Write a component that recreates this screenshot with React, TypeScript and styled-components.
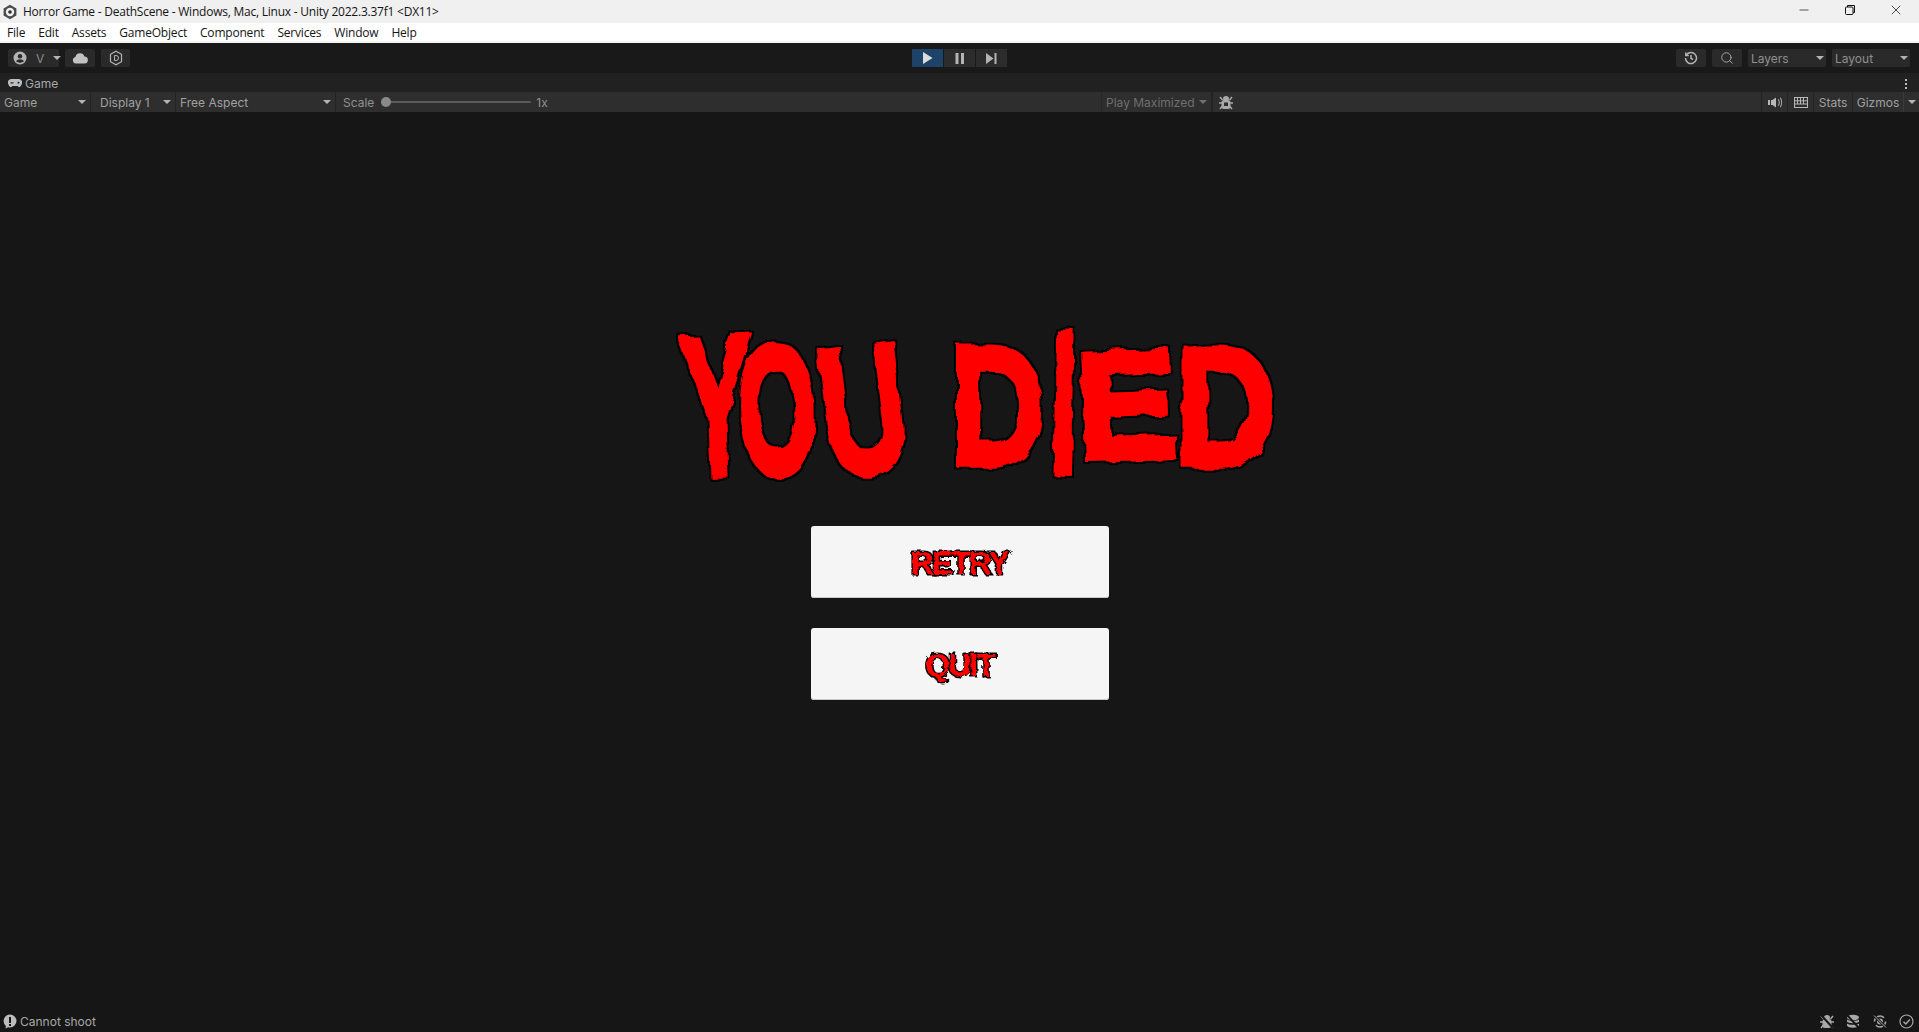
import styled, { createGlobalStyle } from "styled-components";
import { Search, Minus, X } from "lucide-react";

const GlobalStyle = createGlobalStyle`
  html, body {
    margin: 0;
    padding: 0;
    height: 100%;
    overflow: hidden;
    background: #161616;
  }
  #root { height: 100%; }
`;

const MENU_ITEMS = ["File", "Edit", "Assets", "GameObject", "Component", "Services", "Window", "Help"];

const TITLE_LETTERS = [
  { ch: "Y", w: 60, r: -2, sx: 0.68, sy: 1.33, y: 1 },
  { ch: "O", w: 60, r: -2, sx: 0.68, sy: 1.23, y: 5 },
  { ch: "U", w: 112, r: -7, sx: 0.83, sy: 1.23, y: 4 },
  { ch: " ", w: 33, r: 0, sx: 1, sy: 1, y: 0 },
  { ch: "D", w: 90, r: 0, sx: 0.89, sy: 1.14, y: 2 },
  { ch: "I", w: 44, r: 1, sx: 0.7, sy: 1.35, y: -2 },
  { ch: "E", w: 80, r: -2, sx: 1.04, sy: 1.02, y: 1 },
  { ch: "D", w: 118, r: 0, sx: 0.94, sy: 1.14, y: 2 },
];

const App = () => {
  return (
    <>
      <GlobalStyle />
      <Filters width="0" height="0" aria-hidden="true">
        <filter id="brush" x="-10%" y="-10%" width="120%" height="120%">
          <feTurbulence type="fractalNoise" baseFrequency="0.045" numOctaves="2" seed="4" result="noise" />
          <feDisplacementMap in="SourceGraphic" in2="noise" scale="10" result="rough" />
          <feMorphology in="rough" operator="dilate" radius="1.5" result="fat" />
          <feFlood floodColor="#000000" />
          <feComposite in2="fat" operator="in" result="edge" />
          <feMerge>
            <feMergeNode in="edge" />
            <feMergeNode in="rough" />
          </feMerge>
        </filter>
        <filter id="jagged" x="-10%" y="-20%" width="120%" height="140%">
          <feTurbulence type="fractalNoise" baseFrequency="0.18" numOctaves="2" seed="7" result="noise" />
          <feDisplacementMap in="SourceGraphic" in2="noise" scale="5" />
        </filter>
      </Filters>
      <Window>
        <TitleBar>
          <AppLogo viewBox="0 0 16 16">
            <path d="M8 .8 14.400 4.400v7.200L8 15.200 1.600 11.600V4.400z" fill="#4a4a4a" />
            <circle cx="8" cy="8" r="4.200" fill="#eeeeee" />
            <circle cx="8" cy="8" r="1.800" fill="#2e2e2e" />
          </AppLogo>
          <TitleText>Horror Game - DeathScene - Windows, Mac, Linux - Unity 2022.3.37f1 &lt;DX11&gt;</TitleText>
          <WindowControls>
            <WindowButton>
              <Minus size={14} strokeWidth={1.2} />
            </WindowButton>
            <WindowButton>
              <svg width="12" height="12" viewBox="0 0 12 12" fill="none" stroke="#111" strokeWidth="1">
                <rect x="1.500" y="3" width="7.500" height="7.500" rx="1" />
                <path d="M3.500 3V1.500h7V8.500H9" />
              </svg>
            </WindowButton>
            <WindowButton>
              <X size={16} strokeWidth={1.1} />
            </WindowButton>
          </WindowControls>
        </TitleBar>

        <MenuBar>
          {MENU_ITEMS.map((item) => (
            <MenuItem key={item}>{item}</MenuItem>
          ))}
        </MenuBar>

        <MainToolbar>
          <ToolGroup>
            <AccountButton>
              <svg width="14" height="14" viewBox="0 0 14 14">
                <circle cx="7" cy="7" r="6.500" fill="#b4b4b4" />
                <circle cx="7" cy="5.300" r="2.200" fill="#2b2b2b" />
                <path d="M3 10.600c.8-1.700 2.300-2.400 4-2.400s3.200.7 4 2.400L7 12z" fill="#2b2b2b" />
              </svg>
              <AccountName>V</AccountName>
              <Caret />
            </AccountButton>
            <ToolButton $w={30}>
              <svg width="16" height="12" viewBox="0 0 16 12">
                <path d="M4 11.500a3.300 3.300 0 0 1-.6-6.500 4.700 4.700 0 0 1 9-.6A3.500 3.500 0 0 1 12.300 11.500z" fill="#c2c2c2" />
              </svg>
            </ToolButton>
            <ToolButton $w={29}>
              <svg width="14" height="16" viewBox="0 0 14 16" fill="none" stroke="#b4b4b4">
                <path d="M7 1.200 12.500 4.300v7.400L7 14.800 1.500 11.700V4.300z" strokeWidth="1.200" />
                <path d="M5.500 5.500h1.500a2.500 2.500 0 0 1 0 5H5.500z" strokeWidth="1" />
              </svg>
            </ToolButton>
          </ToolGroup>

          <PlayGroup>
            <PlayButton $active>
              <svg width="11" height="12" viewBox="0 0 11 12">
                <path d="M1 0 10.500 6 1 12z" fill="#dcdcdc" />
              </svg>
            </PlayButton>
            <PlayButton>
              <svg width="10" height="11" viewBox="0 0 10 11" fill="#b4b4b4">
                <rect x="0.500" width="3" height="11" />
                <rect x="6" width="3" height="11" />
              </svg>
            </PlayButton>
            <PlayButton>
              <svg width="11" height="11" viewBox="0 0 11 11" fill="#b4b4b4">
                <path d="M0 0 7.500 5.500 0 11z" />
                <rect x="8.500" width="2" height="11" />
              </svg>
            </PlayButton>
          </PlayGroup>

          <ToolGroup $end>
            <ToolButton $w={30}>
              <svg width="14" height="14" viewBox="0 0 14 14" fill="none" stroke="#b4b4b4" strokeWidth="1.500">
                <path d="M2.300 4.200A5.500 5.500 0 1 1 1.500 7" />
                <path d="M1.800 1.500v3h3" />
                <path d="M7 4v3.300l2 1.200" />
              </svg>
            </ToolButton>
            <ToolButton $w={30}>
              <Search size={14} color="#a8a8a8" strokeWidth={1.6} />
            </ToolButton>
            <SelectButton>
              Layers
              <Caret />
            </SelectButton>
            <SelectButton>
              Layout
              <Caret />
            </SelectButton>
          </ToolGroup>
        </MainToolbar>

        <TabStrip>
          <GameTab>
            <svg width="14" height="9" viewBox="0 0 14 9">
              <path d="M3.500 0h7a3.500 3.500 0 0 1 3 5.500C12.800 8 11 9 9.500 7H4.500C3 9 1.200 8 .5 5.500A3.500 3.500 0 0 1 3.500 0z" fill="#bdbdbd" />
              <rect x="2.500" y="3.300" width="3" height="1.200" fill="#222" />
              <circle cx="10.500" cy="3.800" r="1" fill="#222" />
            </svg>
            Game
          </GameTab>
          <KebabMenu>
            <i />
            <i />
            <i />
          </KebabMenu>
        </TabStrip>

        <GameToolbar>
          <GameDropdown $w={91}>
            Game
            <Caret />
          </GameDropdown>
          <GameDropdown $w={85} $indent>
            Display 1
            <Caret />
          </GameDropdown>
          <GameDropdown $w={160}>
            Free Aspect
            <Caret />
          </GameDropdown>
          <ScaleControl>
            Scale
            <ScaleTrack>
              <ScaleThumb />
            </ScaleTrack>
            <span>1x</span>
          </ScaleControl>
          <PlayMaximized>
            Play Maximized
            <Caret />
          </PlayMaximized>
          <GameToggle $w={26}>
            <BugIcon />
          </GameToggle>
          <ToolbarSpacer />
          <GameToggle $w={26}>
            <svg width="14" height="11" viewBox="0 0 14 11" fill="#b8b8b8">
              <rect y="3" width="2" height="5" />
              <path d="M3 3h1.500L8 .5v10L4.500 8H3z" />
              <path d="M10 2.500c1 1.800 1 4.200 0 6l.8.4c1.200-2 1.200-4.800 0-6.800z" />
              <path d="M12 1c1.500 2.700 1.500 6.300 0 9l.8.4c1.600-2.900 1.600-6.900 0-9.800z" />
            </svg>
          </GameToggle>
          <GameToggle $w={26}>
            <svg width="14" height="11" viewBox="0 0 14 11" fill="none" stroke="#b8b8b8" strokeWidth="1">
              <rect x=".5" y=".5" width="13" height="10" />
              <path d="M.5 3.800h13M.5 7h13M3.500 .5v6.500M6.500 .5v6.500M9.500 .5v6.500" />
            </svg>
          </GameToggle>
          <GameTextButton $w={39}>Stats</GameTextButton>
          <GameTextButton $w={51}>Gizmos</GameTextButton>
          <GizmoCaret>
            <Caret />
          </GizmoCaret>
        </GameToolbar>

        <GameView>
          <DeathTitle aria-label="YOU DIED">
            {TITLE_LETTERS.map((l, i) => (
              <TitleLetter
                key={i}
                style={{
                  width: l.w,
                  transform: `translateY(${l.y}px) rotate(${l.r}deg) scale(${l.sx}, ${l.sy})`,
                }}
              >
                {l.ch}
              </TitleLetter>
            ))}
          </DeathTitle>
          <GameButton>
            <ButtonLabel>RETRY</ButtonLabel>
          </GameButton>
          <GameButton>
            <ButtonLabel>QUIT</ButtonLabel>
          </GameButton>
        </GameView>

        <StatusBar>
          <StatusMessage>
            <svg width="14" height="15" viewBox="0 0 14 15">
              <path d="M7 .5a6.500 6.500 0 0 1 0 13c-.6 0-1.200-.1-1.800-.3L2.500 14.500l.4-2.600A6.500 6.500 0 0 1 7 .5z" fill="#bcbcbc" />
              <rect x="6" y="3" width="2" height="6" fill="#161616" />
              <rect x="6" y="10" width="2" height="2" fill="#161616" />
            </svg>
            Cannot shoot
          </StatusMessage>
          <StatusIcons>
            <BugIcon struck />
            <svg width="16" height="15" viewBox="0 0 16 15" fill="#a8a8a8">
              <ellipse cx="8" cy="3.500" rx="6" ry="2.700" />
              <path d="M2 5.500c1 1.800 11 1.800 12 0v2.300c-1 1.900-11 1.900-12 0z" />
              <path d="M2 9.500c1 1.800 11 1.800 12 0v2c-1 3-11 3-12 0z" />
              <path d="M2 1 14 14" stroke="#161616" strokeWidth="2" />
            </svg>
            <svg width="16" height="15" viewBox="0 0 16 15" fill="none" stroke="#a8a8a8" strokeWidth="1.600">
              <path d="M2.500 7.500a5.500 5.500 0 0 1 9.500-3.700M13.500 7.500A5.500 5.500 0 0 1 4 11.200" />
              <circle cx="8" cy="7.500" r="2.200" fill="#a8a8a8" />
              <path d="M2 1.500 14 13.500" stroke="#161616" strokeWidth="2.500" />
              <path d="M2 1.500 14 13.500" strokeWidth="1" />
            </svg>
            <svg width="15" height="15" viewBox="0 0 15 15" fill="none" stroke="#a8a8a8" strokeWidth="1.200">
              <circle cx="7.500" cy="7.500" r="6.500" />
              <path d="M4.500 7.800 6.800 10 10.800 5.500" strokeWidth="1.500" />
            </svg>
          </StatusIcons>
        </StatusBar>
      </Window>
    </>
  );
};

const BugIcon = ({ struck }: { struck?: boolean }) => (
  <svg width="14" height="15" viewBox="0 0 14 15" fill="none">
    <path d="M1 2 3.500 5M13 2 10.500 5M0 8h3M11 8h3M1 14 3.500 11M13 14 10.500 11" stroke="#a8a8a8" strokeWidth="1.500" />
    <ellipse cx="7" cy="3.500" rx="3" ry="2.500" fill="#a8a8a8" />
    <rect x="2.500" y="5" width="9" height="9" rx="2.500" fill="#a8a8a8" />
    {!struck && <rect x="5" y="7.500" width="4" height="3.500" fill="#2e2e2e" />}
    {struck && <path d="M1 1 13 14" stroke="#161616" strokeWidth="2" />}
  </svg>
);

const Filters = styled.svg`
  position: absolute;
`;

const Window = styled.div`
  height: 100vh;
  display: flex;
  flex-direction: column;
  overflow: hidden;
  font-family: Inter, "Liberation Sans", sans-serif;
  font-size: 12px;
  color: #b0b0b0;
`;

const TitleBar = styled.div`
  height: 23px;
  flex: none;
  display: flex;
  align-items: center;
  padding-left: 2px;
  background: #f0f0f0;
`;

const AppLogo = styled.svg`
  width: 16px;
  height: 16px;
  margin-right: 5px;
`;

const TitleText = styled.span`
  font-family: "Open Sans", "Liberation Sans", sans-serif;
  font-size: 12px;
  letter-spacing: -0.23px;
  color: #141414;
  white-space: nowrap;
`;

const WindowControls = styled.div`
  margin-left: auto;
  align-self: flex-start;
  display: flex;
  align-items: center;
  color: #111;
`;

const WindowButton = styled.div`
  width: 46px;
  height: 20px;
  display: flex;
  align-items: center;
  justify-content: center;
`;

const MenuBar = styled.div`
  height: 20px;
  flex: none;
  box-sizing: border-box;
  padding: 0 0 0 7px;
  display: flex;
  align-items: center;
  gap: 13px;
  background: #ffffff;
  border-bottom: 2px solid #f4f4f4;
`;

const MenuItem = styled.span`
  font-family: "Open Sans", "Liberation Sans", sans-serif;
  font-size: 12px;
  letter-spacing: -0.2px;
  color: #141414;
`;

const MainToolbar = styled.div`
  height: 30px;
  flex: none;
  box-sizing: border-box;
  padding: 0 9px;
  display: grid;
  grid-template-columns: 1fr auto 1fr;
  align-items: center;
  background: #191919;
`;

const ToolGroup = styled.div<{ $end?: boolean }>`
  display: flex;
  align-items: center;
  gap: 6px;
  justify-content: ${(p) => (p.$end ? "flex-end" : "flex-start")};

  &:first-child {
    margin-left: -1px;
  }
`;

const ToolButton = styled.div<{ $w: number }>`
  width: ${(p) => p.$w}px;
  height: 18px;
  flex: none;
  display: flex;
  align-items: center;
  justify-content: center;
  border-radius: 2px;
  background: #2a2a2a;
`;

const AccountButton = styled.div`
  width: 51px;
  height: 18px;
  flex: none;
  box-sizing: border-box;
  padding: 0 4px 0 5px;
  display: flex;
  align-items: center;
  gap: 9px;
  border-radius: 2px;
  background: #2a2a2a;

  svg {
    flex: none;
  }
`;

const AccountName = styled.span`
  color: #8a8a8a;
  font-size: 12px;
`;

const Caret = styled.i`
  display: block;
  flex: none;
  margin-left: auto;
  width: 0;
  height: 0;
  border-left: 4px solid transparent;
  border-right: 4px solid transparent;
  border-top: 4px solid #b4b4b4;
`;

const SelectButton = styled.div`
  width: 78px;
  height: 18px;
  flex: none;
  box-sizing: border-box;
  padding: 0 2px 0 3px;
  display: flex;
  align-items: center;
  border-radius: 2px;
  background: #2a2a2a;
  color: #8f8f8f;
`;

const PlayGroup = styled.div`
  display: flex;
  gap: 1px;
`;

const PlayButton = styled.div<{ $active?: boolean }>`
  width: 31px;
  height: 18px;
  display: flex;
  align-items: center;
  justify-content: center;
  background: ${(p) => (p.$active ? "#1d4468" : "#2c2c2c")};
`;

const TabStrip = styled.div`
  height: 19px;
  flex: none;
  box-sizing: border-box;
  padding: 2px 12px 0 8px;
  display: flex;
  align-items: center;
  justify-content: space-between;
  background: #212121;
`;

const GameTab = styled.div`
  display: flex;
  align-items: center;
  gap: 3px;
  color: #a8a8a8;
  line-height: 1;
`;

const KebabMenu = styled.div`
  display: flex;
  flex-direction: column;
  gap: 2px;

  i {
    display: block;
    width: 2px;
    height: 2px;
    background: #bcbcbc;
  }
`;

const GameToolbar = styled.div`
  height: 20px;
  flex: none;
  display: flex;
  align-items: stretch;
  background: #2e2e2e;
  color: #a0a0a0;
`;

const GameDropdown = styled.div<{ $w: number; $indent?: boolean }>`
  width: ${(p) => p.$w}px;
  flex: none;
  box-sizing: border-box;
  display: flex;
  align-items: center;
  padding: 0 4px 0 ${(p) => (p.$indent ? 9 : 4)}px;
  border-right: 1px solid #232323;
`;

const ScaleControl = styled.div`
  flex: 1;
  display: flex;
  align-items: center;
  padding-left: 7px;
  color: #909090;
`;

const ScaleTrack = styled.div`
  position: relative;
  width: 150px;
  height: 2px;
  margin: 0 5px 0 7px;
  border-radius: 1px;
  background: #5a5a5a;
`;

const ScaleThumb = styled.div`
  position: absolute;
  left: 0;
  top: -4px;
  width: 10px;
  height: 10px;
  border-radius: 50%;
  background: #8a8a8a;
`;

const PlayMaximized = styled.div`
  width: 111px;
  flex: none;
  box-sizing: border-box;
  display: flex;
  align-items: center;
  padding: 0 4px 0 4px;
  border-left: 1px solid #262626;
  border-right: 1px solid #232323;
  color: #6f6f6f;

  ${Caret} {
    border-top-color: #6f6f6f;
  }
`;

const ToolbarSpacer = styled.div`
  width: 523px;
  flex: none;
`;

const GameToggle = styled.div<{ $w: number }>`
  width: ${(p) => p.$w}px;
  flex: none;
  box-sizing: border-box;
  display: flex;
  align-items: center;
  justify-content: center;
  border-left: 1px solid #232323;
`;

const GameTextButton = styled.div<{ $w: number }>`
  width: ${(p) => p.$w}px;
  flex: none;
  box-sizing: border-box;
  display: flex;
  align-items: center;
  justify-content: center;
  border-left: 1px solid #232323;
`;

const GizmoCaret = styled.div`
  width: 16px;
  flex: none;
  box-sizing: border-box;
  display: flex;
  align-items: center;
  padding-right: 3px;
  border-left: 1px solid #3a3a3a;
`;

const GameView = styled.main`
  flex: 1;
  min-height: 0;
  display: flex;
  flex-direction: column;
  align-items: center;
  padding-top: 218px;
  background: #161616;
`;

const DeathTitle = styled.h1`
  margin: 0 0 48px 51px;
  height: 148px;
  flex: none;
  display: flex;
  justify-content: center;
  align-items: center;
  font-family: "Liberation Sans", sans-serif;
  font-weight: 400;
  font-size: 138px;
  line-height: 148px;
  color: #ff0000;
  -webkit-text-stroke: 13px #ff0000;
  filter: url(#brush);
`;

const TitleLetter = styled.span`
  display: flex;
  flex: none;
  justify-content: center;
  white-space: pre;
`;

const GameButton = styled.button`
  width: 298px;
  height: 72px;
  flex: none;
  margin: 0 0 30px;
  padding: 2px 0 0;
  border: none;
  border-radius: 3px;
  background: #f5f5f5;
  box-shadow: inset 0 -1px 0 #c8c8c8;
`;

const ButtonLabel = styled.span`
  display: inline-block;
  font-family: "Liberation Sans", sans-serif;
  font-weight: 700;
  font-size: 32px;
  letter-spacing: -2px;
  color: #ff0000;
  -webkit-text-stroke: 3px #000000;
  paint-order: stroke fill;
  filter: url(#jagged);
`;

const StatusBar = styled.footer`
  height: 24px;
  flex: none;
  box-sizing: border-box;
  padding: 2px 5px 0 3px;
  display: flex;
  align-items: center;
  justify-content: space-between;
  background: #161616;
`;

const StatusMessage = styled.div`
  display: flex;
  align-items: center;
  gap: 3px;
  color: #a8a8a8;
`;

const StatusIcons = styled.div`
  display: flex;
  align-items: center;
  gap: 11px;
`;

export default App;
